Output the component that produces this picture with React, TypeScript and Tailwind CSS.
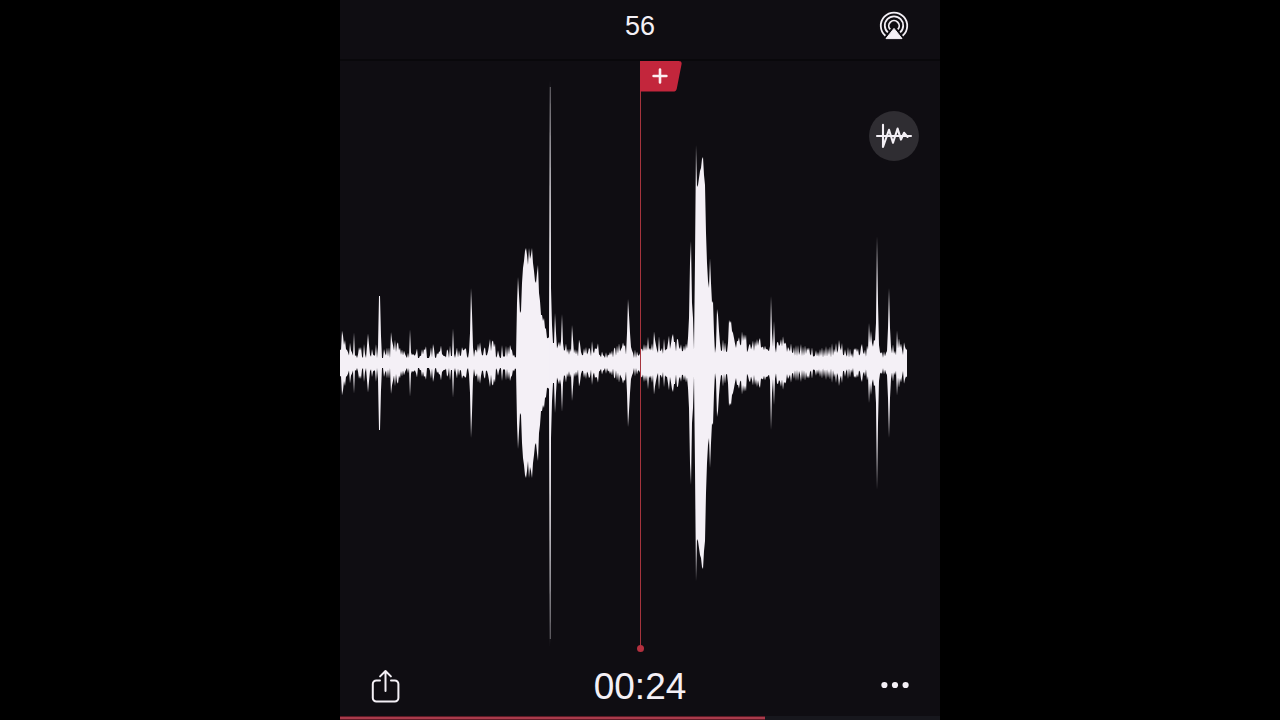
import React from "react";

/* Peak amplitude for each horizontal step of the recording. */
const PEAKS: number[] = [
  14, 16, 28, 26, 20, 21, 15, 13, 11, 10, 17, 13, 11, 11, 23, 10, 8, 6, 9, 14,
  13, 14, 8, 7, 15, 10, 8, 17, 25, 18, 10, 8, 12, 9, 8, 9, 15, 8, 16, 67,
  67, 27, 9, 7, 12, 10, 9, 13, 9, 13, 8, 25, 22, 18, 15, 20, 14, 18, 19, 14,
  14, 10, 12, 9, 11, 9, 7, 6, 9, 8, 25, 13, 9, 9, 8, 8, 10, 12, 6, 5,
  7, 8, 12, 10, 13, 13, 14, 6, 5, 4, 8, 13, 9, 16, 13, 7, 6, 9, 9, 11,
  12, 15, 10, 8, 7, 7, 7, 12, 11, 7, 14, 9, 11, 26, 12, 7, 10, 13, 8, 11,
  8, 9, 14, 13, 13, 14, 13, 8, 7, 14, 30, 75, 50, 16, 9, 12, 13, 12, 17, 14,
  18, 13, 9, 9, 13, 14, 9, 9, 12, 17, 21, 15, 20, 21, 17, 17, 8, 8, 11, 8,
  6, 7, 14, 8, 7, 8, 14, 9, 14, 11, 16, 14, 12, 8, 8, 6, 6, 60, 86, 68,
  50, 52, 80, 95, 102, 112, 115, 108, 98, 115, 104, 108, 115, 100, 92, 82, 80, 90, 98, 70,
  62, 48, 48, 42, 45, 35, 34, 25, 25, 26, 284, 75, 38, 20, 20, 50, 30, 18, 18, 20,
  18, 22, 49, 20, 14, 14, 17, 12, 13, 10, 13, 11, 38, 24, 13, 13, 10, 12, 10, 20,
  18, 12, 9, 9, 13, 11, 14, 10, 11, 14, 13, 10, 18, 13, 11, 14, 14, 15, 17, 10,
  8, 7, 10, 8, 7, 6, 9, 6, 8, 8, 10, 9, 11, 8, 13, 14, 10, 15, 12, 17,
  13, 14, 16, 19, 17, 17, 14, 30, 64, 48, 30, 18, 13, 10, 7, 11, 7, 10, 8, 8,
  10, 13, 14, 13, 17, 14, 17, 15, 22, 15, 15, 14, 18, 16, 27, 23, 18, 14, 13, 22,
  14, 13, 14, 12, 20, 14, 14, 15, 20, 24, 17, 20, 25, 27, 22, 20, 15, 22, 22, 17,
  15, 17, 13, 13, 16, 14, 18, 17, 25, 45, 100, 122, 60, 45, 13, 105, 218, 176, 178, 185,
  192, 195, 204, 206, 188, 178, 130, 100, 82, 75, 105, 80, 60, 62, 30, 15, 17, 54, 48, 32,
  20, 14, 14, 20, 14, 18, 13, 13, 20, 43, 40, 42, 32, 30, 25, 20, 17, 21, 22, 24,
  20, 20, 28, 24, 27, 24, 25, 14, 14, 17, 18, 15, 17, 20, 15, 20, 18, 22, 19, 22,
  23, 17, 16, 16, 14, 16, 14, 14, 13, 13, 17, 67, 30, 16, 42, 16, 13, 19, 20, 18,
  19, 22, 19, 24, 20, 20, 18, 13, 15, 14, 13, 17, 12, 11, 14, 10, 15, 10, 15, 10,
  12, 16, 10, 14, 10, 15, 11, 14, 13, 14, 10, 9, 13, 8, 7, 8, 11, 8, 10, 8,
  12, 9, 13, 8, 12, 9, 14, 9, 13, 10, 14, 9, 16, 10, 13, 12, 17, 12, 14, 20,
  16, 14, 17, 10, 9, 12, 9, 8, 13, 8, 12, 8, 9, 7, 13, 13, 14, 12, 13, 9,
  10, 15, 17, 12, 10, 12, 9, 15, 13, 40, 20, 32, 20, 18, 22, 22, 40, 127, 60, 18,
  12, 10, 10, 7, 10, 8, 10, 12, 35, 75, 35, 16, 12, 16, 11, 12, 12, 26, 18, 22,
  17, 18, 14, 11, 18, 16, 14,
];

const LEVELS = PEAKS.map((a, i) => {
  const before = PEAKS[i - 1] ?? a;
  const after = PEAKS[i + 1] ?? a;
  if (Math.max(a, before, after) > 30) return a;
  return Math.max(5, a + 0.6 * (a - (before + after) / 2));
});

const top = LEVELS.map((a, x) => `${x},${-a}`);
const bottom = LEVELS.map((a, x) => `${x},${a}`).reverse();
const WAVE = `M${top.join("L")}H567V14L${bottom.join("L")}Z`;

function Waveform() {
  return (
    <svg
      role="img"
      aria-label="Recording waveform"
      viewBox="0 -302 600 605"
      preserveAspectRatio="none"
      className="min-h-0 w-full flex-1 text-[#f4f0f6]"
    >
      <path d={WAVE} fill="currentColor" />
      <path d="M209.6 -26L209.9 -276H210.5L211 -26V26L210.5 276H209.9L209.6 26Z" fill="currentColor" opacity="0.6" />
    </svg>
  );
}

function AirPlayIcon() {
  return (
    <svg viewBox="0 0 30 30" className="size-[30px]" fill="none" stroke="currentColor" strokeWidth="1.8">
      <path d="M6.4 24.8A13.2 13.2 0 1 1 23.6 24.8" />
      <path d="M8.9 21.4A9.2 9.2 0 1 1 21.1 21.4" />
      <path d="M11.2 18.4A5.2 5.2 0 1 1 18.8 18.4" />
      <path d="M15 17.4L23 27.6H7Z" fill="currentColor" strokeWidth="1" strokeLinejoin="round" />
    </svg>
  );
}

function PulseIcon() {
  return (
    <svg viewBox="0 0 38 26" className="h-[26px] w-[38px]" fill="none" stroke="currentColor" strokeWidth="2.1" strokeLinecap="round" strokeLinejoin="round">
      <path d="M2 13H36M8 1.8V24L14 6.8L18 19.8L22.6 5.6L26 16.6L29 9.8L32.6 14" />
    </svg>
  );
}

function ShareIcon() {
  return (
    <svg viewBox="0 0 30 36" className="h-9 w-[30px]" fill="none" stroke="currentColor" strokeWidth="2" strokeLinecap="round" strokeLinejoin="round">
      <path d="M10 11.5H6.4A3.6 3.6 0 0 0 2.8 15.1V28.9A3.6 3.6 0 0 0 6.4 32.5H24.8A3.6 3.6 0 0 0 28.4 28.9V15.1A3.6 3.6 0 0 0 24.8 11.5H21" />
      <path d="M15.5 22V2.2M10.1 7.4L15.5 2L20.9 7.4" />
    </svg>
  );
}

function DotsIcon() {
  return (
    <svg viewBox="0 0 30 8" className="h-2 w-[30px]" fill="currentColor">
      <circle cx="4.4" cy="4" r="3.1" />
      <circle cx="15" cy="4" r="3.1" />
      <circle cx="25.6" cy="4" r="3.1" />
    </svg>
  );
}

export default function App() {
  return (
    <div className="flex min-h-screen justify-center bg-black font-['Liberation_Sans',Arial,sans-serif] text-[#f4f0f6]">
      <main className="flex w-full max-w-[600px] flex-col bg-[#0f0d12]">
        <header className="grid h-[61px] grid-cols-3 items-center border-b-2 border-[#09080b] px-[31px] pb-2">
          <h1 className="col-start-2 text-center text-[27px] leading-8">56</h1>
          <button type="button" aria-label="AirPlay" className="justify-self-end">
            <AirPlayIcon />
          </button>
        </header>

        <section className="relative flex min-h-80 flex-1 flex-col">
          <Waveform />
          <div className="absolute top-0 bottom-[18px] left-1/2 w-px bg-[#a5343d]">
            <span className="absolute -bottom-1 -left-[3px] size-[7px] rounded-full bg-[#b4303f]" />
            <button type="button" aria-label="Add marker" className="absolute top-0 left-0">
              <svg viewBox="0 0 42 31" className="h-[31px] w-[42px]">
                <path d="M0 0H38.5Q42.3 0 41.5 3.6L36.8 27.4Q36.1 30.6 33 30.6H0Z" fill="#c3263c" />
                <path d="M20 8.6V21.4M13.6 15H26.4" stroke="#fbeef1" strokeWidth="2.6" strokeLinecap="round" />
              </svg>
            </button>
          </div>
          <button
            type="button"
            aria-label="Waveform view"
            className="absolute top-[50px] right-[21px] flex size-[50px] items-center justify-center rounded-full bg-[#2f2d32]"
          >
            <PulseIcon />
          </button>
        </section>

        <footer>
          <div className="grid h-[50px] grid-cols-3 items-center px-[30px] pb-2">
            <button type="button" aria-label="Share" className="justify-self-start">
              <ShareIcon />
            </button>
            <time className="text-center text-[37px] leading-10">00:24</time>
            <button type="button" aria-label="More options" className="justify-self-end pb-1">
              <DotsIcon />
            </button>
          </div>
          <div
            role="progressbar"
            aria-label="Playback position"
            aria-valuemin={0}
            aria-valuemax={100}
            aria-valuenow={71}
            className="h-1 bg-[#17171d]"
          >
            <div className="h-full w-[70.8%] border-y border-[#5e1a26] bg-[#a93b4c]" />
          </div>
        </footer>
      </main>
    </div>
  );
}
